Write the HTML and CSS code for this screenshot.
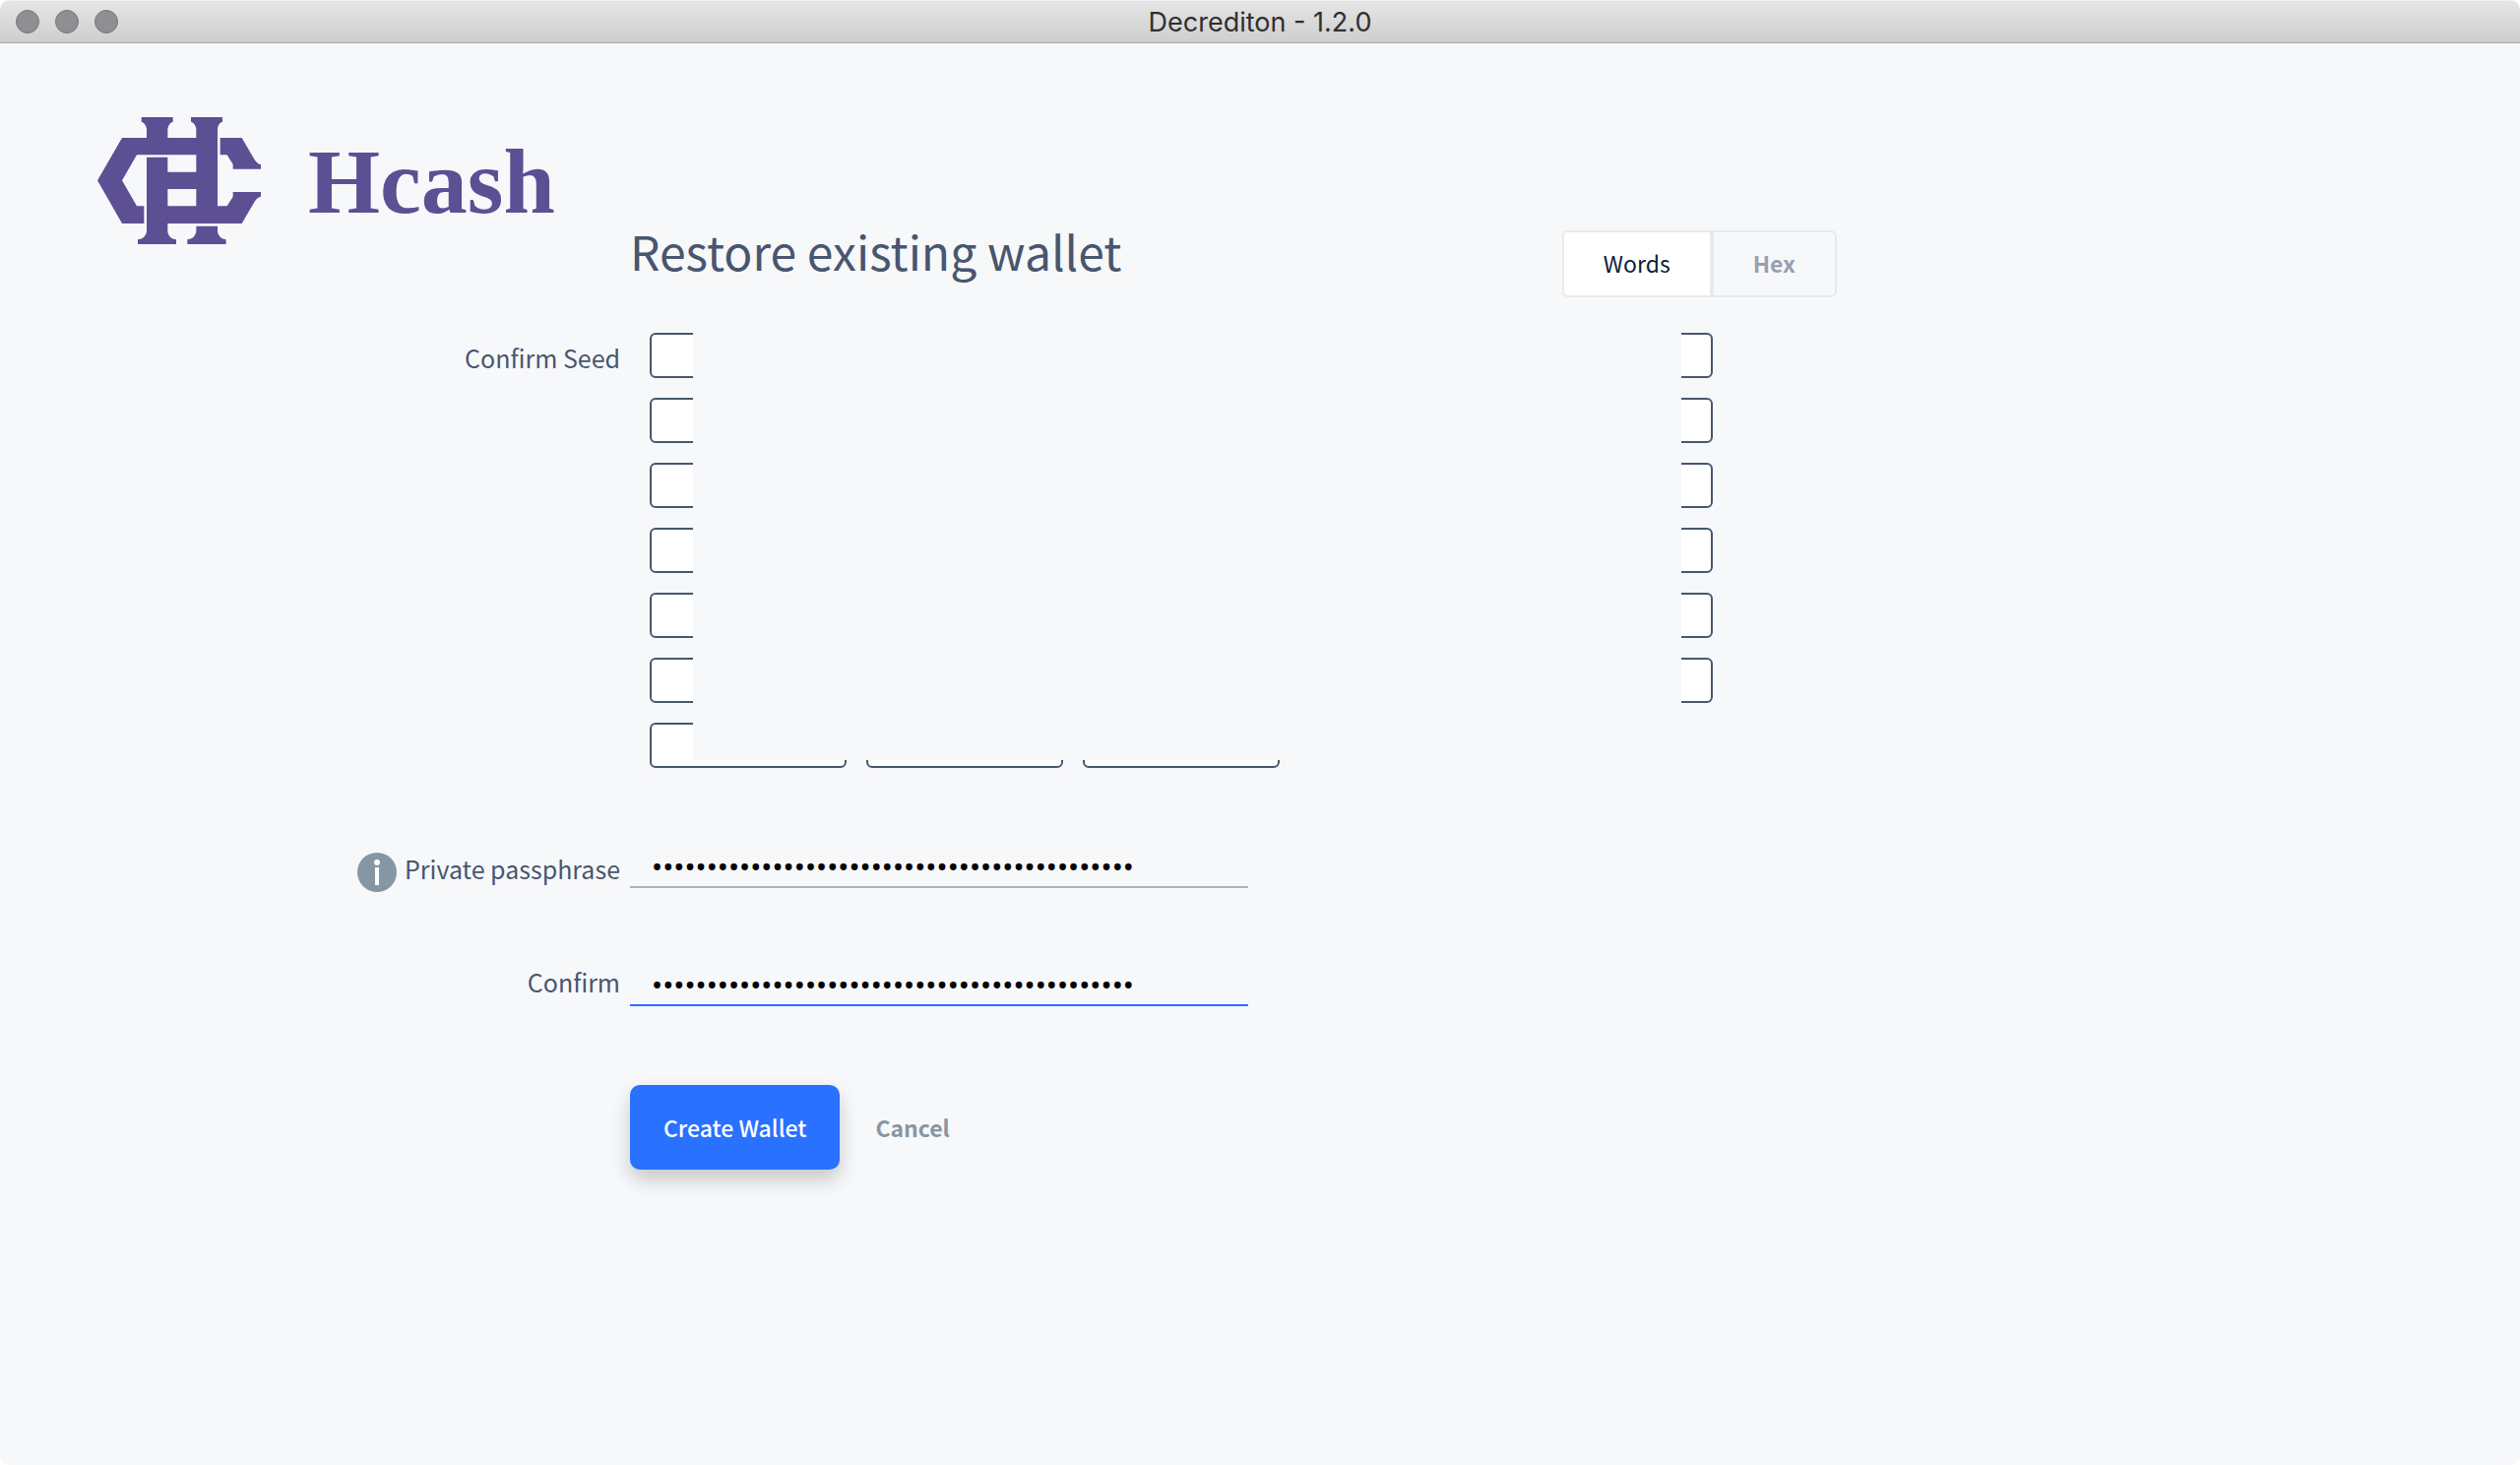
FILE: index.html
```
<!DOCTYPE html>
<html lang="en">
<head>
<meta charset="utf-8">
<title>Decrediton - 1.2.0</title>
<link rel="stylesheet" href="styles.css">
</head>
<body>
<div class="window">
  <header class="titlebar">
    <div class="lights"><span class="light"></span><span class="light"></span><span class="light"></span></div>
    <span class="title">Decrediton - 1.2.0</span>
  </header>
  <main class="page">
    <div class="brand">
      <svg class="brand-mark" viewBox="57 57 498 387" aria-hidden="true">
        <path d="M132 120H207V94Q205 76 191 71V57H287V71Q273 76 271 94V120H358V94Q356 76 342 71V57H438V71Q424 76 423 94V328H452L470 299V285H555V299Q545 300 536 314L497 381H271V406Q273 427 297 430V444H180V430Q204 427 207 406V179H271V224H358V172H177L132 250L177 328H199V381H132L57 250ZM271 276V328H358V276Z" fill-rule="evenodd"/>
        <path d="M431 120H497L536 187Q545 201 555 201V215H470V201L452 172H431Z"/>
        <path d="M358 389H423V406Q426 427 449 430V444H331V430Q355 427 358 406Z"/>
      </svg>
      <span class="brand-name">Hcash</span>
    </div>
    <div class="heading">
      <h1>Restore existing wallet</h1>
      <div class="toggle">
        <button type="button" class="toggle-option active">Words</button>
        <button type="button" class="toggle-option">Hex</button>
      </div>
    </div>
    <form class="form">
      <div class="row">
        <label class="label seed-label" for="word1">Confirm Seed</label>
        <div class="seed">
          <input id="word1" class="word" aria-label="Word 1"><input class="word" aria-label="Word 2"><input class="word" aria-label="Word 3"><input class="word" aria-label="Word 4"><input class="word" aria-label="Word 5">
          <input class="word" aria-label="Word 6"><input class="word" aria-label="Word 7"><input class="word" aria-label="Word 8"><input class="word" aria-label="Word 9"><input class="word" aria-label="Word 10">
          <input class="word" aria-label="Word 11"><input class="word" aria-label="Word 12"><input class="word" aria-label="Word 13"><input class="word" aria-label="Word 14"><input class="word" aria-label="Word 15">
          <input class="word" aria-label="Word 16"><input class="word" aria-label="Word 17"><input class="word" aria-label="Word 18"><input class="word" aria-label="Word 19"><input class="word" aria-label="Word 20">
          <input class="word" aria-label="Word 21"><input class="word" aria-label="Word 22"><input class="word" aria-label="Word 23"><input class="word" aria-label="Word 24"><input class="word" aria-label="Word 25">
          <input class="word" aria-label="Word 26"><input class="word" aria-label="Word 27"><input class="word" aria-label="Word 28"><input class="word" aria-label="Word 29"><input class="word" aria-label="Word 30">
          <input class="word" aria-label="Word 31"><input class="word" aria-label="Word 32"><input class="word" aria-label="Word 33">
        </div>
      </div>
      <div class="row">
        <label class="label info-label" for="pass">
          <svg class="info" viewBox="0 0 40 40" aria-hidden="true"><circle cx="20" cy="20" r="20" fill="#8796a3"/><circle cx="20" cy="10" r="3" fill="#fff"/><path d="M18 15h4v18h-4z" fill="#fff"/></svg>
          Private passphrase
        </label>
        <input id="pass" class="secret" type="password" value="abcdefghijklmnopqrstuvwxyzabcdefghijklmnopqr">
      </div>
      <div class="row">
        <label class="label" for="confirm">Confirm</label>
        <input id="confirm" class="secret current" type="password" value="abcdefghijklmnopqrstuvwxyzabcdefghijklmnopqr">
      </div>
      <div class="actions">
        <button type="submit" class="create">Create Wallet</button>
        <button type="button" class="cancel">Cancel</button>
      </div>
    </form>
  </main>
</div>
</body>
</html>
```
FILE: styles.css
```
* { box-sizing: border-box; }

body {
  margin: 0;
  background: #fff;
  color: #48566f;
  font: 25px/30px "Noto Sans CJK SC", sans-serif;
}

button, input { font: inherit; }

.window {
  min-height: 100vh;
  overflow: hidden;
  border-radius: 10px;
  background: #f7f8fa;
}

.titlebar {
  display: grid;
  grid-template-columns: 1fr auto 1fr;
  align-items: center;
  height: 44px;
  padding: 0 16px;
  border-bottom: 1px solid #a9a9a9;
  background: linear-gradient(#e6e6e6, #cecece);
  box-shadow: inset 0 1px #f4f4f4;
}

.lights { display: flex; gap: 16px; }

.light {
  width: 24px;
  height: 24px;
  border: 1px solid #77767b;
  border-radius: 50%;
  background: #8f8e93;
}

.title {
  padding-top: 2px;
  color: #2f2f2f;
  font: 27px/32px Inter, sans-serif;
}

.page {
  display: grid;
  grid-template-columns: 25% minmax(0, 1226px);
}

.brand {
  display: flex;
  align-items: center;
  gap: 48px;
  height: 129px;
  margin-top: 75px;
  padding-left: 99px;
  color: #5d4f94;
}

.brand-mark {
  flex: none;
  width: 166px;
  height: 129px;
  fill: currentColor;
}

.brand-name { font: bold 94px/100px "Liberation Serif", serif; }

.heading {
  display: flex;
  align-items: flex-end;
  justify-content: space-between;
  height: 258px;
}

h1 {
  margin: 0;
  font-size: 48px;
  font-weight: 400;
  line-height: 96px;
}

.toggle {
  display: flex;
  border: 2px solid #e7eaed;
  border-radius: 6px;
}

.toggle-option {
  height: 64px;
  padding: 0 40px 3px;
  border: 0;
  background: none;
  color: #97a0b2;
  font-size: 23px;
  font-weight: 700;
}

.toggle-option.active {
  border-right: 4px solid #e7eaed;
  border-radius: 4px 0 0 4px;
  background: #fff;
  color: #0c1e3e;
  font-weight: 400;
}

.form, .row {
  display: grid;
  grid-template-columns: subgrid;
  grid-column: 1 / -1;
}

.form { row-gap: 76px; padding-top: 36px; }

.row { align-items: start; min-height: 44px; }

.label { padding-right: 10px; text-align: right; }

.seed-label { padding-top: 10px; }

.info-label {
  display: flex;
  justify-content: flex-end;
  gap: 8px;
  line-height: 40px;
}

.info { width: 40px; height: 40px; margin-top: 4px; }

.seed {
  position: relative;
  display: grid;
  grid-template-columns: repeat(5, minmax(0, 1fr));
  gap: 20px;
  max-width: 1100px;
  padding: 0 0 6px 20px;
}

.seed::after {
  content: "";
  position: absolute;
  inset: 0 32px 14px 64px;
  background: #f7f8fa;
}

.word {
  width: 100%;
  height: 46px;
  padding: 0 10px;
  border: 2px solid #48566f;
  border-radius: 6px;
  background: #fff;
}

.secret {
  width: 100%;
  max-width: 628px;
  height: 40px;
  padding: 0 22px;
  border: 0;
  border-bottom: 2px solid #a9b3c0;
  outline: 0;
  background: none;
  color: #000;
  font: 33px/36px Roboto, sans-serif;
}

.secret.current { border-color: #2971ff; }

.actions {
  display: flex;
  grid-column: 2;
  gap: 36px;
}

.create, .cancel {
  height: 86px;
  padding: 0;
  border: 0;
  background: none;
  color: #8796a3;
  font-size: 23px;
  font-weight: 700;
}

.create {
  padding: 0 34px;
  border-radius: 10px;
  background: #2971ff;
  box-shadow: 0 10px 20px rgba(0, 0, 0, .2);
  color: #fff;
  font-weight: 500;
}
```
